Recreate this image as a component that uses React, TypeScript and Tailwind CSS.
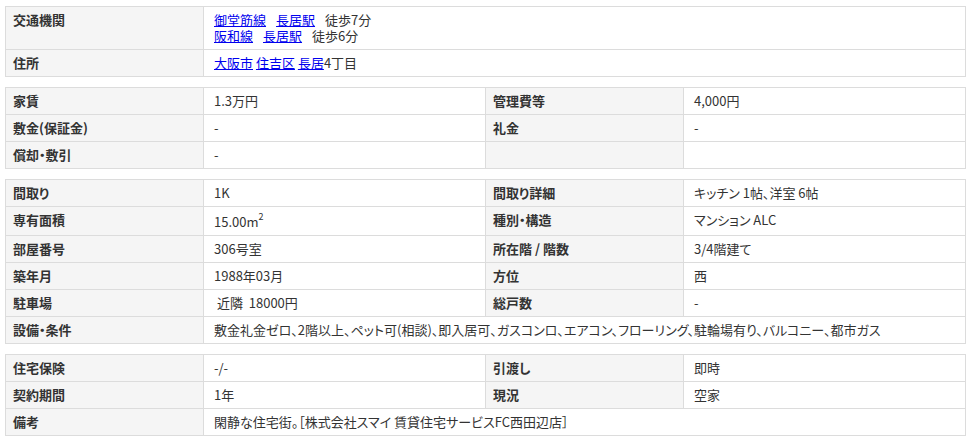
import type { ReactNode } from "react"

const th =
  "bg-[#f5f5f5] border border-[#dcdcdc] px-[7px] py-[5px] text-left align-top font-bold text-[#333]"
const td = "bg-white border border-[#dcdcdc] pl-[10px] pr-2 py-[5px] text-left align-top text-[#333]"
const link = "text-[#0000ee] underline"

function Cols() {
  return (
    <colgroup>
      <col className="w-[198px]" />
      <col className="w-[282px]" />
      <col className="w-[198px]" />
      <col className="w-[282px]" />
    </colgroup>
  )
}

function Table({ children }: { children: ReactNode }) {
  return (
    <table className="w-[960px] table-fixed border-collapse mb-[10px]">
      <Cols />
      <tbody>{children}</tbody>
    </table>
  )
}

function Pair({ a, b, c, d }: { a: string; b: ReactNode; c?: string; d?: ReactNode }) {
  return (
    <tr>
      <th className={th}>{a}</th>
      <td className={td}>{b}</td>
      <th className={th}>{c}</th>
      <td className={td}>{d}</td>
    </tr>
  )
}

function Wide({ a, b }: { a: string; b: ReactNode }) {
  return (
    <tr>
      <th className={th}>{a}</th>
      <td className={td} colSpan={3}>
        {b}
      </td>
    </tr>
  )
}

export default function App() {
  return (
    <main className="min-h-[445px] bg-white pt-[6px] pl-[5px] text-[13px] leading-[16px] font-['Noto_Sans_CJK_JP','Noto_Sans',sans-serif] [font-feature-settings:'palt']">
      <Table>
        <Wide
          a="交通機関"
          b={
            <>
              <div className="h-[16px]">
                <a className={link}>御堂筋線</a>
                <a className={`${link} ml-[10px]`}>長居駅</a>
                <span className="ml-[10px]">徒歩7分</span>
              </div>
              <div className="h-[16px]">
                <a className={link}>阪和線</a>
                <a className={`${link} ml-[10px]`}>長居駅</a>
                <span className="ml-[10px]">徒歩6分</span>
              </div>
            </>
          }
        />
        <Wide
          a="住所"
          b={
            <>
              <a className={link}>大阪市</a> <a className={link}>住吉区</a>{" "}
              <a className={link}>長居</a>4丁目
            </>
          }
        />
      </Table>

      <Table>
        <Pair a="家賃" b="1.3万円" c="管理費等" d="4,000円" />
        <Pair a="敷金(保証金)" b="-" c="礼金" d="-" />
        <Pair a="償却・敷引" b="-" />
      </Table>

      <Table>
        <Pair a="間取り" b="1K" c="間取り詳細" d="キッチン 1帖、洋室 6帖" />
        <Pair
          a="専有面積"
          b={
            <span className="inline-block pt-[2px]">
              15.00m<sup className="text-[9px] -top-[7px]">2</sup>
            </span>
          }
          c="種別・構造"
          d="マンション ALC"
        />
        <Pair a="部屋番号" b="306号室" c="所在階 / 階数" d="3/4階建て" />
        <Pair a="築年月" b="1988年03月" c="方位" d="西" />
        <Pair a="駐車場" b={"\u00a0近隣\u00a0\u00a018000円"} c="総戸数" d="-" />
        <Wide
          a="設備・条件"
          b="敷金礼金ゼロ、2階以上、ペット可(相談)、即入居可、ガスコンロ、エアコン、フローリング、駐輪場有り、バルコニー、都市ガス"
        />
      </Table>

      <Table>
        <Pair a="住宅保険" b="-/-" c="引渡し" d="即時" />
        <Pair a="契約期間" b="1年" c="現況" d="空家" />
        <Wide a="備考" b="閑静な住宅街。［株式会社スマイ 賃貸住宅サービスFC西田辺店］" />
      </Table>
    </main>
  )
}
